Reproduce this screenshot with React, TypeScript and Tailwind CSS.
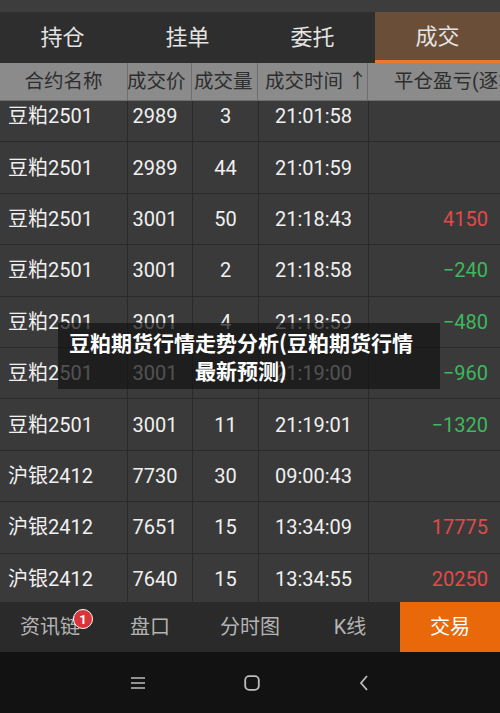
import React from "react";

const font = { fontFamily: '"Roboto", "Noto Sans CJK SC", sans-serif' };

type Row = { name: string; price: string; qty: string; time: string; pnl: string; color?: "red" | "green" };

const rows: Row[] = [
  { name: "豆粕2501", price: "2989", qty: "3", time: "21:01:58", pnl: "" },
  { name: "豆粕2501", price: "2989", qty: "44", time: "21:01:59", pnl: "" },
  { name: "豆粕2501", price: "3001", qty: "50", time: "21:18:43", pnl: "4150", color: "red" },
  { name: "豆粕2501", price: "3001", qty: "2", time: "21:18:58", pnl: "−240", color: "green" },
  { name: "豆粕2501", price: "3001", qty: "4", time: "21:18:59", pnl: "−480", color: "green" },
  { name: "豆粕2501", price: "3001", qty: "8", time: "21:19:00", pnl: "−960", color: "green" },
  { name: "豆粕2501", price: "3001", qty: "11", time: "21:19:01", pnl: "−1320", color: "green" },
  { name: "沪银2412", price: "7730", qty: "30", time: "09:00:43", pnl: "" },
  { name: "沪银2412", price: "7651", qty: "15", time: "13:34:09", pnl: "17775", color: "red" },
  { name: "沪银2412", price: "7640", qty: "15", time: "13:34:55", pnl: "20250", color: "red" },
];

export default function App() {
  return (
    <div className="w-[500px] h-[713px] flex flex-col bg-[#3a3a3a] overflow-hidden relative" style={font}>
      <div className="h-[12px] bg-[#3d3d3d]" />
      {/* Tabs */}
      <div className="h-[51px] grid grid-cols-4 bg-[#2e2e2e] text-[22px] text-[#e4e4e4]">
        <div className="flex items-center justify-center">持仓</div>
        <div className="flex items-center justify-center">挂单</div>
        <div className="flex items-center justify-center">委托</div>
        <div className="flex items-center justify-center bg-[#6a4e38] border-b-[3px] border-[#e8782a]">成交</div>
      </div>
      {/* Header */}
      <div className="h-[38px] flex bg-[#8b8b8b] text-[19.5px] text-[#2e2e2e] border-b border-[#6e6e6e] whitespace-nowrap">
        <div className="w-[128px] flex items-center justify-center border-r border-[#6e6e6e] overflow-hidden">合约名称</div>
        <div className="w-[65px] flex items-center border-r border-[#6e6e6e] overflow-hidden -ml-px">成交价</div>
        <div className="w-[66px] flex items-center pl-[2px] border-r border-[#6e6e6e] overflow-hidden">成交量</div>
        <div className="w-[110px] flex items-center pl-[7px] border-r border-[#6e6e6e] overflow-hidden">成交时间 ↑</div>
        <div className="flex-1 flex items-center pl-[26px] overflow-hidden">平仓盈亏(逐笔)</div>
      </div>
      {/* Rows */}
      <div className="h-[501px] overflow-hidden">
        <div className="-mt-[10px]">
          {rows.map((r, i) => (
            <div key={i} className="h-[51.4px] flex border-b border-[#2a2a2a] text-[20px] text-[#f0f0f0]">
              <div className="w-[128px] flex items-center pl-[8px] border-r border-[#2a2a2a]">{r.name}</div>
              <div className="w-[65px] flex items-center justify-center pr-[10px] border-r border-[#2a2a2a]">{r.price}</div>
              <div className="w-[66px] flex items-center justify-center border-r border-[#2a2a2a]">{r.qty}</div>
              <div className="w-[110px] flex items-center justify-center border-r border-[#2a2a2a]">{r.time}</div>
              <div
                className={`flex-1 flex items-center justify-end pr-[12px] ${
                  r.color === "red" ? "text-[#e04a4a]" : "text-[#3db85c]"
                }`}
              >
                {r.pnl}
              </div>
            </div>
          ))}
        </div>
      </div>
      {/* Bottom nav */}
      <div className="h-[50px] grid grid-cols-5 bg-[#2a2a2a] text-[20px] text-[#b4b4b4]">
        <div className="flex items-center justify-center relative">
          <span>资讯链</span>
          <span className="absolute left-[73px] top-[7px] w-[20px] h-[20px] rounded-full bg-[#d8343a] border-[1.5px] border-white text-white text-[13px] font-bold flex items-center justify-center leading-none">
            1
          </span>
        </div>
        <div className="flex items-center justify-center">盘口</div>
        <div className="flex items-center justify-center">分时图</div>
        <div className="flex items-center justify-center">K线</div>
        <div className="flex items-center justify-center bg-[#e8680a] text-white">交易</div>
      </div>
      {/* System bar */}
      <div className="flex-1 bg-[#121212] flex items-center pl-[130px]">
        <div className="flex items-center gap-[98px]">
          <svg width="16" height="14" viewBox="0 0 16 14">
            <path d="M1 2H15M1 7H15M1 12H15" stroke="#bdbdbd" strokeWidth="1.6" />
          </svg>
          <svg width="16" height="16" viewBox="0 0 16 16">
            <rect x="1.2" y="1.2" width="13.6" height="13.6" rx="4" fill="none" stroke="#bdbdbd" strokeWidth="1.8" />
          </svg>
          <svg width="12" height="18" viewBox="0 0 12 18">
            <path d="M9 2L3 9L9 16" fill="none" stroke="#bdbdbd" strokeWidth="1.8" />
          </svg>
        </div>
      </div>
      {/* Overlay title */}
      <div className="absolute left-[58px] top-[323px] w-[382px] h-[66px] bg-[rgba(20,20,20,0.72)] flex items-center justify-center text-center pr-[16px]">
        <div className="text-white font-bold text-[21px] leading-[28px] whitespace-nowrap" style={{ fontFamily: '"Noto Sans CJK SC", sans-serif' }}>
          豆粕期货行情走势分析(豆粕期货行情
          <br />
          最新预测)
        </div>
      </div>
    </div>
  );
}
